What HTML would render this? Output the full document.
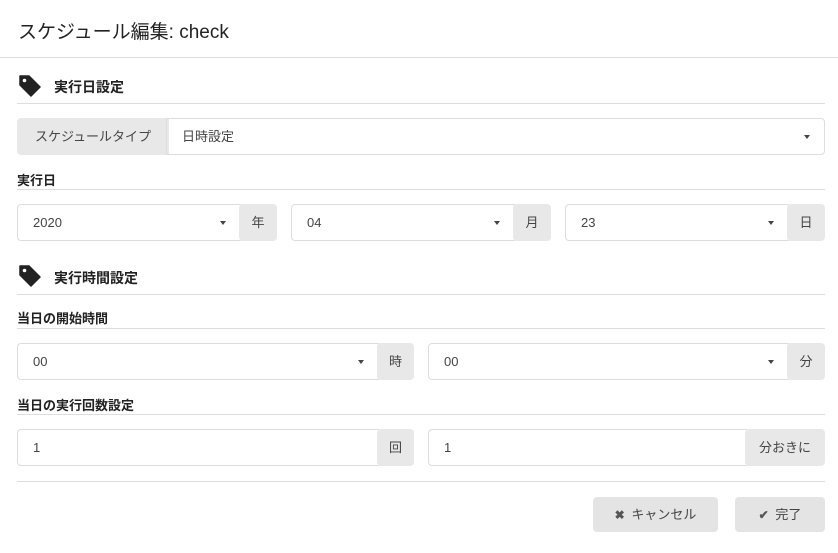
<!DOCTYPE html><html><head><meta charset="utf-8"><style>
*{box-sizing:border-box;margin:0;padding:0}
body{width:838px;height:553px;background:#fff;font-family:"Liberation Sans","Noto Sans CJK JP",sans-serif;color:#222;position:relative;overflow:hidden}
.a{position:absolute}
.hr{position:absolute;left:17px;width:808px;height:1px;background:#ddd}
.sel{position:absolute;height:37px;border:1px solid #ddd;border-radius:4px;font-size:13px;color:#444;padding-left:15px;line-height:35px}
.sel.dd:after{content:"";position:absolute;right:14px;top:16px;border-left:3.5px solid transparent;border-right:3.5px solid transparent;border-top:4px solid #444}
.ad{position:absolute;height:37px;background:#e8e8e8;border-radius:4px;font-size:13px;color:#444;text-align:center;line-height:37px}
.lb{position:absolute;left:17px;font-size:13px;font-weight:bold;color:#222}
.sec{position:absolute;left:54px;font-size:14px;font-weight:bold}
.btn{position:absolute;top:497px;height:35px;background:#e4e4e4;border-radius:4px;font-size:13px;color:#444;text-align:center;line-height:35px}
.btn b{color:#555;font-size:12px;margin-right:3px}
</style></head><body>
<div class="a" style="left:18px;top:17px;font-size:19px;color:#222">スケジュール編集: check</div>
<div class="a" style="left:0;top:57px;width:838px;height:1px;background:#ddd"></div>

<svg class="a" style="left:19px;top:75px" width="22" height="22" viewBox="0 0 22 22"><path d="M1 1h9l11 11-9 9L1 10z" fill="#222" stroke="#222" stroke-linejoin="round" stroke-width="1.5"/><circle cx="5.5" cy="5.5" r="1.8" fill="#fff"/></svg>
<div class="sec" style="top:77px">実行日設定</div>
<div class="hr" style="top:103px"></div>
<div class="ad" style="left:17px;top:118px;width:152px;border-radius:4px 0 0 4px">スケジュールタイプ</div>
<div class="sel dd" style="left:166px;top:118px;width:659px;border-radius:0 4px 4px 0">日時設定</div>

<div class="lb" style="top:170px">実行日</div>
<div class="hr" style="top:189px"></div>
<div class="sel dd" style="left:17px;top:204px;width:224px;border-radius:4px 0 0 4px">2020</div>
<div class="ad" style="left:239px;top:204px;width:38px">年</div>
<div class="sel dd" style="left:291px;top:204px;width:224px;border-radius:4px 0 0 4px">04</div>
<div class="ad" style="left:513px;top:204px;width:38px">月</div>
<div class="sel dd" style="left:565px;top:204px;width:224px;border-radius:4px 0 0 4px">23</div>
<div class="ad" style="left:787px;top:204px;width:38px">日</div>

<svg class="a" style="left:19px;top:265px" width="22" height="22" viewBox="0 0 22 22"><path d="M1 1h9l11 11-9 9L1 10z" fill="#222" stroke="#222" stroke-linejoin="round" stroke-width="1.5"/><circle cx="5.5" cy="5.5" r="1.8" fill="#fff"/></svg>
<div class="sec" style="top:268px">実行時間設定</div>
<div class="hr" style="top:294px"></div>
<div class="lb" style="top:308px">当日の開始時間</div>
<div class="hr" style="top:328px"></div>
<div class="sel dd" style="left:17px;top:343px;width:362px;border-radius:4px 0 0 4px">00</div>
<div class="ad" style="left:377px;top:343px;width:37px">時</div>
<div class="sel dd" style="left:428px;top:343px;width:361px;border-radius:4px 0 0 4px">00</div>
<div class="ad" style="left:787px;top:343px;width:38px">分</div>

<div class="lb" style="top:395px">当日の実行回数設定</div>
<div class="hr" style="top:414px"></div>
<div class="sel" style="left:17px;top:429px;width:362px;border-radius:4px 0 0 4px">1</div>
<div class="ad" style="left:377px;top:429px;width:37px">回</div>
<div class="sel" style="left:428px;top:429px;width:319px;border-radius:4px 0 0 4px">1</div>
<div class="ad" style="left:745px;top:429px;width:80px">分おきに</div>
<div class="hr" style="top:481px"></div>

<div class="btn" style="left:593px;width:125px"><b>✖</b> キャンセル</div>
<div class="btn" style="left:735px;width:90px"><b>✔</b> 完了</div>
</body></html>
